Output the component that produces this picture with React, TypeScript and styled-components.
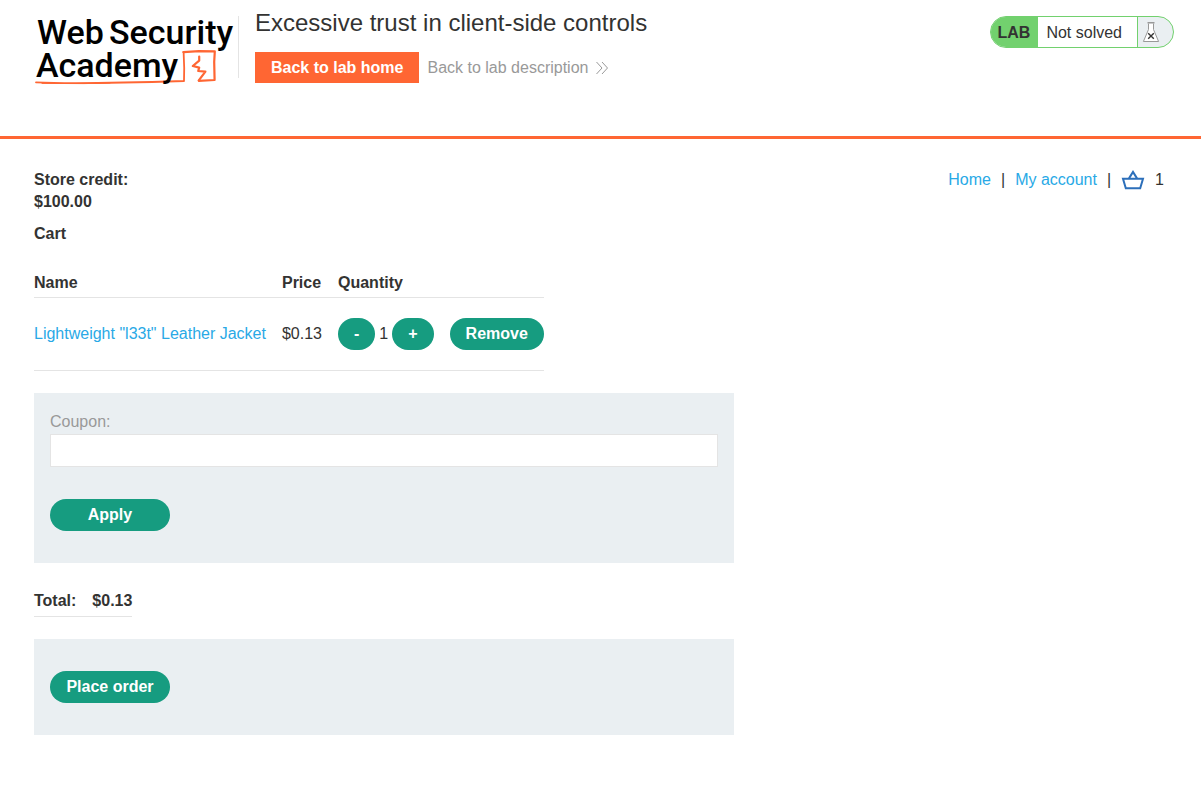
import React from "react";
import styled, { createGlobalStyle } from "styled-components";

const GlobalStyle = createGlobalStyle`
  *, *::before, *::after { box-sizing: border-box; }
  body {
    margin: 0;
    background: #fff;
    color: #333332;
    font: 16px/22px "Liberation Sans", Arial, sans-serif;
  }
  h1, h2, p { margin: 0; }
  a { text-decoration: none; }
`;

const Header = styled.header`
  display: flex;
  align-items: flex-start;
  min-height: 139px;
  padding: 0 27px 0 34px;
  border-bottom: 3px solid #ff6633;
`;

const LogoLink = styled.a`
  display: block;
  flex: none;
  padding-top: 8px;
  line-height: 0;
`;

const Divider = styled.div`
  width: 1px;
  height: 62px;
  margin: 16px 16px 0 3px;
  background: #e4e4e4;
`;

const TitleBlock = styled.div`
  flex: 1;
  padding-top: 8px;
`;

const Title = styled.h1`
  font-size: 24px;
  font-weight: 400;
  line-height: 30px;
`;

const Actions = styled.div`
  display: flex;
  align-items: center;
  gap: 8px;
  margin-top: 14px;
`;

const HomeButton = styled.a`
  padding: 0 16px;
  background: #ff6633;
  color: #fff;
  font-weight: 700;
  line-height: 31px;
`;

const DescriptionLink = styled.a`
  display: inline-flex;
  align-items: center;
  gap: 8px;
  color: #999;
`;

const Status = styled.div`
  display: flex;
  flex: none;
  height: 32px;
  margin-top: 16px;
  overflow: hidden;
  border: 1px solid #72d16e;
  border-radius: 16px;
  background: #eaeff2;
  line-height: 32px;
`;

const StatusTag = styled.span`
  padding: 0 8px 0 7px;
  background: #72d16e;
  font-weight: 700;
`;

const StatusText = styled.span`
  padding: 0 15px 0 8px;
  border-right: 1px solid #72d16e;
  background: #fff;
`;

const StatusIcon = styled.span`
  display: flex;
  align-items: center;
  width: 35px;
  padding-left: 4px;
`;

const Main = styled.main`
  padding: 30px 37px 50px 34px;
`;

const TopRow = styled.div`
  display: flex;
  justify-content: space-between;
  align-items: flex-start;
`;

const Credit = styled.p`
  font-weight: 700;
`;

const Nav = styled.nav`
  display: flex;
  align-items: center;
  gap: 10px;
`;

const TextLink = styled.a`
  color: #29a9e6;
`;

const BasketLink = styled.a`
  display: flex;
`;

const Heading = styled.h2`
  margin-top: 10px;
  font-size: 16px;
  line-height: 22px;
`;

const CartTable = styled.table`
  margin-top: 27px;
  border-collapse: collapse;

  th, td {
    padding: 0 16px 0 0;
    border-bottom: 1px solid #e4e4e4;
    text-align: left;
    white-space: nowrap;
  }
  th { padding-bottom: 3px; }
  td { height: 73px; }
  th:last-child, td:last-child { padding-right: 0; }
`;

const Quantity = styled.div`
  display: flex;
  align-items: center;
  gap: 4px;
`;

const Button = styled.button<{ $wide?: boolean }>`
  height: 32px;
  min-width: ${(p) => (p.$wide ? "120px" : "0")};
  padding: 0 16px;
  border: 0;
  border-radius: 16px;
  background: #169c80;
  color: #fff;
  font: inherit;
  font-weight: 700;
  cursor: pointer;
`;

const Panel = styled.form<{ $top: number }>`
  display: flex;
  flex-direction: column;
  align-items: flex-start;
  max-width: 700px;
  margin-top: 22px;
  padding: ${(p) => p.$top}px 16px 32px;
  background: #eaeff2;
`;

const Label = styled.label`
  color: #999;
`;

const Field = styled.input`
  width: 100%;
  height: 33px;
  margin: 1px 0 32px;
  padding: 0 8px;
  border: 1px solid #e4e4e4;
  border-radius: 0;
  background: #fff;
  font: inherit;
`;

const TotalTable = styled.table`
  margin-top: 27px;
  border-collapse: collapse;

  th, td {
    padding: 0 0 4px;
    border-bottom: 1px solid #e4e4e4;
    font-weight: 700;
    text-align: left;
  }
  th { padding-right: 16px; }
`;

const Logo = () => (
  <svg width="201" height="80" viewBox="34 8 201 80" role="img" aria-label="Web Security Academy">
    <g fill="none" stroke="#ff6633" strokeLinecap="round" strokeLinejoin="round">
      <path d="M36 82.4 C70 84 140 82.4 184 81 L184.2 68 L183.6 51.8" strokeWidth="1.8" />
      <path d="M42 83.4 L84 83.6 L110 83" strokeWidth="1" />
      <path d="M183.4 52.2 L199 51.2 L214.8 51.4 L214.2 62 L214.6 80 L198.8 80.8" strokeWidth="2.2" />
      <path d="M199.2 56.6 L199.2 60.6 L192.8 66 L199.2 67.6 L198.2 71 L205.4 71.6 L198.8 80.4" strokeWidth="2.2" />
    </g>
    <g fill="#000" fontFamily="Roboto, sans-serif" fontWeight="500" fontSize="34">
      <text x="37" y="44">Web</text>
      <text x="109" y="44">Security</text>
      <text x="36" y="77">Academy</text>
    </g>
  </svg>
);

const Chevrons = () => (
  <svg width="12" height="14" viewBox="0 0 12 14" fill="none" stroke="#999" aria-hidden="true">
    <path d="M0.5 1 L6 7 L0.5 13 M6 1 L11.5 7 L6 13" />
  </svg>
);

const Flask = () => (
  <svg width="18" height="22" viewBox="0 0 18 22" fill="none" aria-hidden="true">
    <path d="M6.5 2.5 V8.5 L1.4 20.5 H16.6 L11.5 8.5 V2.5" fill="#fff" stroke="#999" />
    <path d="M5.5 1.8 H12.5" stroke="#999" strokeWidth="1.4" />
    <path d="M6.2 12.2 L11.8 17.8 M11.8 12.2 L6.2 17.8" stroke="#333" strokeWidth="1.4" />
  </svg>
);

const Basket = () => (
  <svg width="24" height="22" viewBox="0 0 24 22" fill="none" stroke="#2c6fba" strokeWidth="2" aria-hidden="true">
    <path d="M2 9.8 H22 L19.2 19.2 H4.8 Z" />
    <path d="M8 9.4 L12 3 L16 9.4" />
  </svg>
);

export default function App() {
  return (
    <>
      <GlobalStyle />
      <Header>
        <LogoLink href="#">
          <Logo />
        </LogoLink>
        <Divider />
        <TitleBlock>
          <Title>Excessive trust in client-side controls</Title>
          <Actions>
            <HomeButton href="#">Back to lab home</HomeButton>
            <DescriptionLink href="#">
              Back to lab description
              <Chevrons />
            </DescriptionLink>
          </Actions>
        </TitleBlock>
        <Status>
          <StatusTag>LAB</StatusTag>
          <StatusText>Not solved</StatusText>
          <StatusIcon>
            <Flask />
          </StatusIcon>
        </Status>
      </Header>
      <Main>
        <TopRow>
          <Credit>
            Store credit:
            <br />
            $100.00
          </Credit>
          <Nav>
            <TextLink href="#">Home</TextLink>
            <span>|</span>
            <TextLink href="#">My account</TextLink>
            <span>|</span>
            <BasketLink href="#" aria-label="Basket">
              <Basket />
            </BasketLink>
            <span>1</span>
          </Nav>
        </TopRow>
        <Heading>Cart</Heading>
        <CartTable>
          <thead>
            <tr>
              <th>Name</th>
              <th>Price</th>
              <th>Quantity</th>
              <th aria-label="Actions" />
            </tr>
          </thead>
          <tbody>
            <tr>
              <td>
                <TextLink href="#">Lightweight "l33t" Leather Jacket</TextLink>
              </td>
              <td>$0.13</td>
              <td>
                <Quantity>
                  <Button type="button">-</Button>
                  1
                  <Button type="button">+</Button>
                </Quantity>
              </td>
              <td>
                <Button type="button">Remove</Button>
              </td>
            </tr>
          </tbody>
        </CartTable>
        <Panel $top={18} onSubmit={(e) => e.preventDefault()}>
          <Label htmlFor="coupon">Coupon:</Label>
          <Field id="coupon" name="coupon" type="text" />
          <Button $wide type="submit">
            Apply
          </Button>
        </Panel>
        <TotalTable>
          <tbody>
            <tr>
              <th scope="row">Total:</th>
              <td>$0.13</td>
            </tr>
          </tbody>
        </TotalTable>
        <Panel $top={32} onSubmit={(e) => e.preventDefault()}>
          <Button $wide type="submit">
            Place order
          </Button>
        </Panel>
      </Main>
    </>
  );
}
